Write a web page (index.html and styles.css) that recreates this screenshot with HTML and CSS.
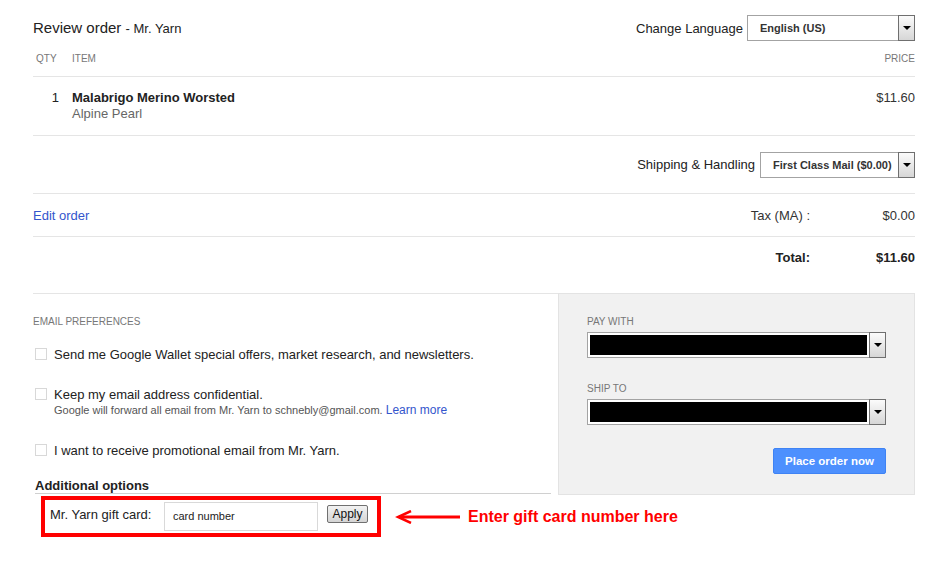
FILE: index.html
```html
<!DOCTYPE html>
<html>
<head>
<meta charset="utf-8">
<link rel="stylesheet" href="styles.css">
</head>
<body>
<div class="page">
  <div class="toprow">
    <div class="title">Review order <span class="merchant">- Mr. Yarn</span></div>
    <div class="lang">
      <span class="lang-label">Change Language</span>
      <div class="select sel-lang"><span class="val">English (US)</span><span class="arrow"><i></i></span></div>
    </div>
  </div>
  <div class="colhead">
    <span class="c-qty">QTY</span>
    <span class="c-item">ITEM</span>
    <span class="c-price">PRICE</span>
  </div>
  <div class="itemrow">
    <span class="c-qty qty-num">1</span>
    <div class="c-item">
      <div class="item-name">Malabrigo Merino Worsted</div>
      <div class="item-sub">Alpine Pearl</div>
    </div>
    <span class="c-price">$11.60</span>
  </div>
  <div class="shiprow">
    <span class="ship-label">Shipping &amp; Handling</span>
    <div class="select sel-ship"><span class="val">First Class Mail ($0.00)</span><span class="arrow"><i></i></span></div>
  </div>
  <div class="taxrow">
    <a class="link edit">Edit order</a>
    <span class="sum-label">Tax (MA) :</span>
    <span class="sum-val">$0.00</span>
  </div>
  <div class="totalrow">
    <span class="sum-label">Total:</span>
    <span class="sum-val">$11.60</span>
  </div>
  <div class="lower">
    <div class="leftcol">
      <div class="caps">EMAIL PREFERENCES</div>
      <div class="check r1"><span class="box"></span><span>Send me Google Wallet special offers, market research, and newsletters.</span></div>
      <div class="check r2"><span class="box"></span>
        <div>
          <div>Keep my email address confidential.</div>
          <div class="small">Google will forward all email from Mr. Yarn to schnebly@gmail.com. <a class="link lm">Learn more</a></div>
        </div>
      </div>
      <div class="check r3"><span class="box"></span><span>I want to receive promotional email from Mr. Yarn.</span></div>
      <div class="addl">Additional options</div>
      <div class="giftline">
        <div class="giftbox">
          <span class="gift-label">Mr. Yarn gift card:</span>
          <div class="gift-input">card number</div>
          <span class="apply">Apply</span>
        </div>
        <svg class="arrowsvg" width="66" height="14" viewBox="0 0 66 14">
          <path d="M65 7 H4" stroke="#f00" stroke-width="3"/>
          <path d="M16 1 L3 7 L16 13" fill="none" stroke="#f00" stroke-width="2.5"/>
        </svg>
        <span class="note">Enter gift card number here</span>
      </div>
    </div>
    <div class="panel">
      <div class="caps">PAY WITH</div>
      <div class="select sel-pay"><span class="black"></span><span class="arrow"><i></i></span></div>
      <div class="caps ship-to">SHIP TO</div>
      <div class="select sel-pay"><span class="black"></span><span class="arrow"><i></i></span></div>
      <div class="btnrow"><span class="place">Place order now</span></div>
    </div>
  </div>
</div>
</body>
</html>
```

FILE: styles.css
```css
html, body { margin: 0; padding: 0; background: #fff; }
body { font-family: "Liberation Sans", Arial, sans-serif; font-size: 13px; color: #222; }
.page { width: 882px; margin-left: 33px; padding-top: 15px; }

.toprow { display: flex; justify-content: space-between; align-items: center; height: 26px; }
.title { font-size: 15px; color: #222; margin-top: -2px; }
.merchant { font-size: 13px; }
.lang { display: flex; align-items: center; }
.lang-label { font-size: 13px; margin-right: 4px; }

.select { display: flex; box-sizing: border-box; height: 26px; border: 1px solid #a3a3a3; background: #fff; }
.select .val { flex: 1; font-weight: bold; font-size: 11px; line-height: 24px; color: #333; padding-left: 12px; }
.select .arrow { width: 17px; box-sizing: border-box; margin: -1px -1px -1px 0; border: 1px solid #6f6f6f; background: linear-gradient(#fbfbfb, #d6d6d6); display: flex; align-items: center; justify-content: center; }
.select .arrow i { display: block; width: 0; height: 0; border-left: 4px solid transparent; border-right: 4px solid transparent; border-top: 4px solid #000; }
.sel-lang { width: 168px; }
.sel-ship { width: 155px; }

.colhead { display: flex; align-items: center; height: 35px; border-bottom: 1px solid #e5e5e5; font-size: 10px; color: #777; }
.c-qty { width: 36px; padding-left: 3px; }
.c-item { flex: 1; }
.c-price { text-align: right; }

.itemrow { display: flex; align-items: flex-start; padding: 13px 0 13px; border-bottom: 1px solid #e5e5e5; line-height: 16px; color: #333; }
.qty-num { box-sizing: border-box; width: 39px; text-align: right; padding-right: 13px; padding-left: 0; color: #222; }
.item-name { font-weight: bold; color: #222; }
.item-sub { color: #666; }

.shiprow { display: flex; justify-content: flex-end; align-items: center; height: 57px; border-bottom: 1px solid #e5e5e5; }
.ship-label { margin-right: 5px; color: #222; }

.taxrow { display: flex; align-items: center; height: 42px; border-bottom: 1px solid #e5e5e5; color: #333; }
.link { color: #3355cc; text-decoration: none; }
.edit { flex: 1; }
.sum-label { text-align: right; }
.sum-val { width: 105px; text-align: right; }
.totalrow { display: flex; justify-content: flex-end; height: 57px; box-sizing: border-box; padding-top: 13px; line-height: 16px; border-bottom: 1px solid #e5e5e5; font-weight: bold; color: #222; }

.lower { display: flex; align-items: flex-start; }
.leftcol { width: 525px; padding-top: 22px; }
.caps { font-size: 10px; line-height: 12px; color: #777; }
.check { display: flex; align-items: flex-start; line-height: 16px; color: #222; }
.check .box { width: 12px; height: 12px; box-sizing: border-box; border: 1px solid #d8d8d8; margin: 1px 7px 0 2px; flex: none; }
.r1 { margin-top: 19px; }
.r2 { margin-top: 24px; }
.r3 { margin-top: 26px; }
.small { font-size: 11px; color: #555; line-height: 14px; }
.lm { font-size: 12px; }

.addl { margin-top: 19px; margin-left: 2px; width: 516px; font-weight: bold; line-height: 15px; border-bottom: 1px solid #d0d0d0; color: #222; }
.giftline { display: flex; align-items: center; margin-top: 2px; white-space: nowrap; width: 700px; }
.giftbox { flex: none; display: flex; align-items: flex-start; margin-left: 8px; width: 340px; height: 41px; box-sizing: border-box; border: 4px solid #f00; padding: 2px 0 0 5px; }
.gift-label { width: 114px; line-height: 16px; margin-top: 5px; color: #222; }
.gift-input { width: 154px; height: 29px; box-sizing: border-box; border: 1px solid #d9d9d9; font-size: 11px; line-height: 27px; padding-left: 8px; color: #222; }
.apply { margin: 3px 0 0 9px; width: 41px; height: 18px; box-sizing: border-box; border: 1px solid #707070; border-radius: 2px; background: linear-gradient(#f2f2f2, #d4d4d4); font-size: 12px; line-height: 16px; text-align: center; color: #111; }
.arrowsvg { flex: none; margin-left: 14px; display: block; }
.note { flex: none; margin-left: 7px; color: #f00; font-weight: bold; font-size: 16px; }

.panel { margin-top: -1px; width: 357px; height: 202px; box-sizing: border-box; border: 1px solid #e3e3e3; background: #f1f1f1; padding: 22px 28px 0 28px; }
.sel-pay { margin-top: 4px; width: 299px; }
.sel-pay .black { flex: 1; background: #000; margin: 2px 2px 2px 2px; }
.ship-to { margin-top: 25px; }
.btnrow { display: flex; justify-content: flex-end; margin-top: 23px; }
.place { width: 113px; height: 26px; box-sizing: border-box; background: #4d90fe; border: 1px solid #3f83f4; border-radius: 2px; color: #fff; font-weight: bold; font-size: 11.5px; line-height: 24px; text-align: center; }
```
